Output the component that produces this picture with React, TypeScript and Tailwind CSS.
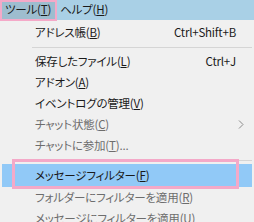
import React from 'react';

const font = "[font-family:'Noto_Sans_CJK_JP','Noto_Sans',sans-serif] [font-feature-settings:'palt']";

type Item =
  | { sep: true }
  | { sep?: false; label: string; key: string; tail?: string; shortcut?: string; disabled?: boolean; sub?: boolean; active?: boolean };

const items: Item[] = [
  { label: 'アドレス帳', key: 'B', shortcut: 'Ctrl+Shift+B' },
  { sep: true },
  { label: '保存したファイル', key: 'L', shortcut: 'Ctrl+J' },
  { label: 'アドオン', key: 'A' },
  { label: 'イベントログの管理', key: 'V' },
  { label: 'チャット状態', key: 'C', disabled: true, sub: true },
  { label: 'チャットに参加', key: 'T', tail: '...', disabled: true },
  { sep: true },
  { label: 'メッセージフィルター', key: 'F', active: true },
  { label: 'フォルダーにフィルターを適用', key: 'R', disabled: true },
  { label: 'メッセージにフィルターを適用', key: 'U', disabled: true },
];

export default function App() {
  return (
    <div className={`relative w-[254px] h-[222px] overflow-hidden bg-[#f0f0f0] text-[11.5px] tracking-[-0.2px] text-[#1a1a1a] ${font}`}>
      <div className="flex h-[20px] items-stretch bg-[#a9d0e6]">
        <span className="flex items-center bg-[#9ebdcf] pl-[5px] pr-[6px]">
          ツール(<span className="underline">T</span>)
        </span>
        <span className="flex items-center px-[3px]">
          ヘルプ(<span className="underline">H</span>)
        </span>
      </div>

      <div className="flex flex-col pt-[2px] pl-[2px] pr-[2px]">
        {items.map((it, i) =>
          it.sep ? (
            <div key={i} className="flex h-[8px] items-center pl-[30px]">
              <div className="h-px w-full bg-[#d5d5d5]" />
            </div>
          ) : (
            <div
              key={i}
              className={`flex h-[21px] items-center pl-[33px] pr-[16px] ${it.active ? 'h-[23px] bg-[#91c9f7]' : ''} ${it.disabled ? 'text-[#6d6d6d]' : ''}`}
            >
              <span>
                {it.label}(<span className="underline">{it.key}</span>){it.tail}
              </span>
              {it.shortcut && <span className="ml-auto">{it.shortcut}</span>}
              {it.sub && (
                <svg className="ml-auto mr-[-8px]" width="6" height="9" viewBox="0 0 6 9">
                  <path d="M1 0.5 L5 4.5 L1 8.5" fill="none" stroke="#8a8a8a" strokeWidth="1" />
                </svg>
              )}
            </div>
          )
        )}
      </div>

      <div className="pointer-events-none absolute left-0 top-0 h-[21px] w-[57px] border-[2px] border-[#f4a9c8]" />
      <div className="pointer-events-none absolute left-[12px] top-[159px] h-[30px] w-[227px] border-[3px] border-[#f4a9c8]" />
    </div>
  );
}
